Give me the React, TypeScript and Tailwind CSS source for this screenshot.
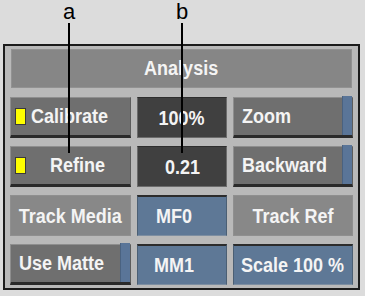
import React from "react";

const font = { fontFamily: '"Liberation Sans", Arial, sans-serif' };

function T({ children, left }: { children: React.ReactNode; left?: boolean }) {
  return (
    <span
      className={
        "inline-block whitespace-nowrap text-[20px] leading-[22px] font-bold text-[#f4f4f4] scale-x-[0.9] " +
        (left ? "origin-left" : "origin-center")
      }
    >
      {children}
    </span>
  );
}

function Btn({
  children,
  indicator,
  strip,
  align = "left",
}: {
  children: React.ReactNode;
  indicator?: boolean;
  strip?: boolean;
  align?: "left" | "center" | "indent";
}) {
  return (
    <div className="flex h-full border-t border-l border-r border-t-[#8e8e8e] border-l-[#8e8e8e] border-r-[#5c5c5c] border-b-[3px] border-b-[#2a2a2a] bg-[#6f6f6f]">
      {indicator && (
        <div className="flex items-center pl-[4px]">
          <div className="w-[11px] h-[17px] bg-[#ffff00] border border-[#3a3a3a]" />
        </div>
      )}
      <div
        className={
          align === "center"
            ? "flex-1 flex items-center justify-center pb-[1px]"
            : align === "indent"
            ? "flex-1 flex items-center pl-[5px] pb-[1px]"
            : "flex-1 flex items-center pl-[8px] pb-[1px]"
        }
      >
        <T left={align !== "center"}>{children}</T>
      </div>
      {strip && <div className="w-[10px] bg-[#5a7598] border-l border-[#4a6280] mt-[-2px]" />}
    </div>
  );
}

function Dark({ children }: { children: React.ReactNode }) {
  return (
    <div className="flex h-full items-center justify-center border border-[#6c6c6c] border-t-[#2e2e2e] bg-[#404040]">
      <T>{children}</T>
    </div>
  );
}

function Blue({ children, pl }: { children: React.ReactNode; pl: string }) {
  return (
    <div
      className={
        "flex h-full items-center border-t-2 border-t-[#2c2c2c] border-l border-r border-[#4b5f74] border-b border-b-[#7d8ea1] bg-[#5e7896] " +
        pl
      }
    >
      <T left>{children}</T>
    </div>
  );
}

function Flat({ children }: { children: React.ReactNode }) {
  return (
    <div className="flex h-full mb-[3px] items-center justify-center bg-[#888888] border border-[#8f8f8f]">
      <T>{children}</T>
    </div>
  );
}

export default function App() {
  return (
    <div className="relative w-[365px] h-[296px] bg-[#dcdcdc] overflow-hidden" style={font}>
      <div className="pt-[44px] pl-[3px]">
        <div className="w-[357px] h-[246px] border-2 border-[#1c1c1c] bg-[#b9b9b9] pt-[3px] px-[3px]">
          <div className="mx-[3px] h-[39px] flex items-center justify-center bg-[#868686] border border-[#929292] pb-[1px]">
            <T>Analysis</T>
          </div>
          <div className="mt-[9px] ml-[2px] grid grid-cols-[121px_90px_120px] grid-rows-[41px_41px_41px_41px] gap-x-[6px] gap-y-[8px]">
            <Btn indicator align="indent">Calibrate</Btn>
            <Dark>100%</Dark>
            <Btn strip>Zoom</Btn>
            <Btn indicator align="center">Refine</Btn>
            <Dark>0.21</Dark>
            <Btn strip>Backward</Btn>
            <Flat>Track Media</Flat>
            <Blue pl="pl-[18px]">MF0</Blue>
            <Flat>Track Ref</Flat>
            <Btn strip>Use Matte</Btn>
            <Blue pl="pl-[16px]">MM1</Blue>
            <Blue pl="pl-[7px]">Scale 100 %</Blue>
          </div>
        </div>
      </div>
      {/* annotations */}
      <div className="absolute left-[59px] top-0 w-[20px] text-center text-[22px] leading-[24px] text-black">a</div>
      <div className="absolute left-[68px] top-[23px] w-[2px] h-[130px] bg-black" />
      <div className="absolute left-[172px] top-0 w-[20px] text-center text-[22px] leading-[24px] text-black">b</div>
      <div className="absolute left-[181px] top-[23px] w-[2px] h-[130px] bg-black" />
    </div>
  );
}
